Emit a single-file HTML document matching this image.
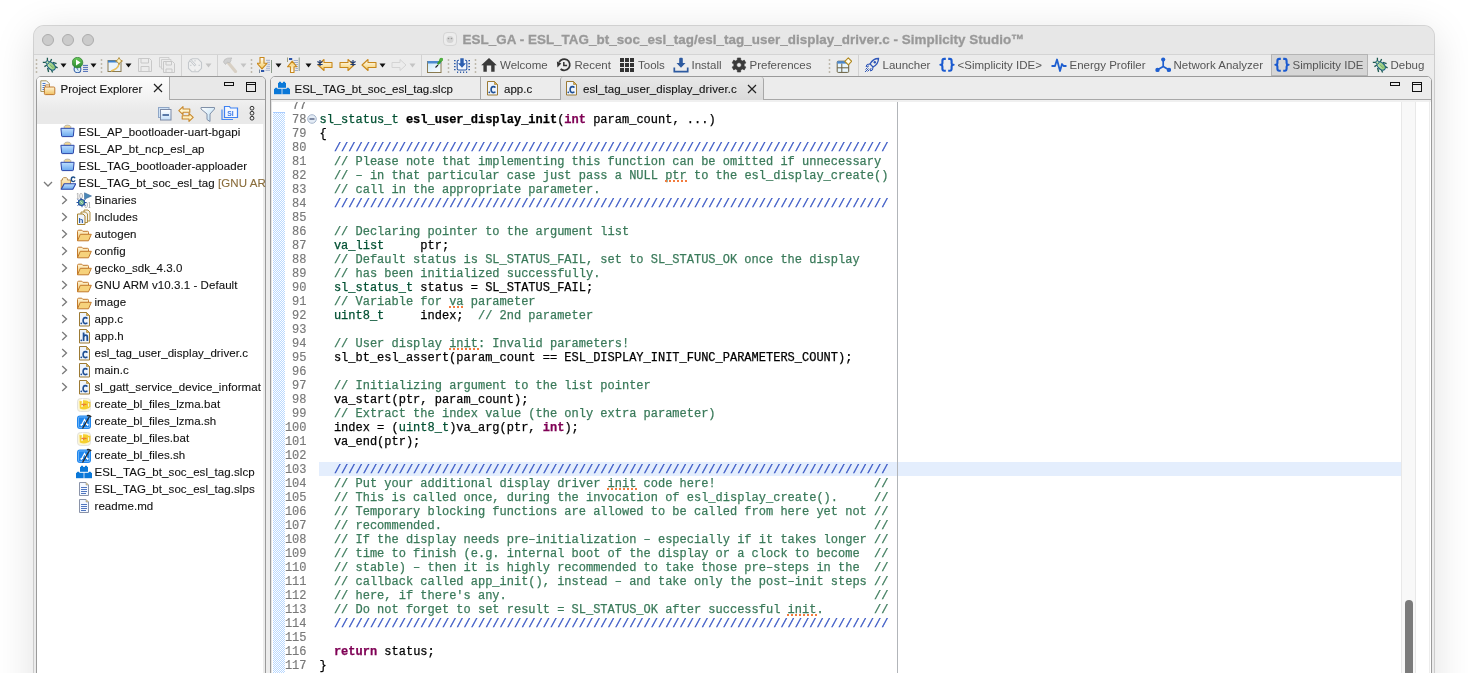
<!DOCTYPE html><html><head><meta charset="utf-8"><style>
*{margin:0;padding:0;box-sizing:border-box}
html,body{width:1468px;height:673px;overflow:hidden;background:#fff}
body{position:relative;font-family:"Liberation Sans",sans-serif;-webkit-font-smoothing:antialiased}
.root{position:absolute;left:0;top:0;width:1468px;height:673px;will-change:transform}
.abs,.ico,.ui,.tbt,.tt,.ln,.cl{position:absolute}
.ico{overflow:visible}
.win{position:absolute;left:34px;top:26px;width:1400px;height:700px;background:#ececec;border-radius:10px;
 box-shadow:0 0 0 1px rgba(0,0,0,0.15),0 8px 42px rgba(0,0,0,0.13)}
.title{position:absolute;left:34px;top:26px;width:1400px;height:29px;background:#e7e7e7;border-radius:10px 10px 0 0;border-bottom:1px solid #d4d4d4}
.light{position:absolute;width:12px;height:12px;border-radius:50%;background:#cbcbcb;border:1px solid #acacac;top:34px}
.ttl{position:absolute;left:462.5px;top:32px;font-weight:bold;font-size:13.4px;color:#999;-webkit-text-stroke:0.3px currentColor;letter-spacing:0.05px;white-space:pre;line-height:16px}
.tbt{font-size:11.5px;color:#555;white-space:pre;line-height:14px}
.ui{font-size:11.5px;color:#111;white-space:pre;line-height:14px;-webkit-text-stroke:0.1px currentColor}
.tt{font-size:11.5px;letter-spacing:0.07px;-webkit-text-stroke:0.1px currentColor;color:#111;white-space:pre;line-height:17px;height:17px}
.panel{position:absolute;background:#fff;border:1px solid #9a9a9a;border-radius:5px 5px 0 0}
.ln{left:270px;width:36.5px;text-align:right;font-family:"Liberation Mono",monospace;font-size:12px;line-height:14px;height:14px;color:#787878;padding-top:1px;-webkit-text-stroke:0.15px currentColor}
.cl{left:319.5px;font-family:"Liberation Mono",monospace;font-size:12px;line-height:14px;height:14px;color:#000;white-space:pre;padding-top:1px;-webkit-text-stroke:0.25px currentColor}
.ty{color:#005032}
.fn{font-weight:bold}
.kw{color:#7f0055;font-weight:bold}
.cm{color:#3a7a5a}
.cmsp{color:#3a7a5a}
.sq{position:absolute;height:2px;background-image:radial-gradient(circle at 2px 1px,#f37b3d 1.1px,rgba(243,123,61,0) 1.5px);background-size:4px 2px;background-repeat:repeat-x}
.dc{color:#3352c2}
</style></head><body>
<svg width="0" height="0" style="position:absolute"><defs>
<symbol id="i-prj" viewBox="0 0 16 16">
 <path d="M4.2 4.5 V2.6 Q4.6 1.1 7.5 1.1 Q10.4 1.1 10.8 2.6 V4.5 Z" fill="#f5d890" stroke="#a8a8a8" stroke-width=".8"/>
 <path d="M0.9 4.3 H14.1 L13.3 12.1 Q13.2 12.6 12.7 12.6 H2.3 Q1.8 12.6 1.7 12.1 Z" fill="url(#gblue)" stroke="#2a45a8" stroke-width="1" stroke-linejoin="round"/>
</symbol>
<linearGradient id="gblue" x1="0" y1="0" x2="0" y2="1"><stop offset="0" stop-color="#bfe0ff"/><stop offset="1" stop-color="#6aa8ee"/></linearGradient>
<linearGradient id="gyel" x1="0" y1="0" x2="0" y2="1"><stop offset="0" stop-color="#fff6d8"/><stop offset="1" stop-color="#f0c060"/></linearGradient>
<symbol id="i-prjc" viewBox="0 0 16 16">
 <path d="M1.2 14 V5 H2.5 V3.5 Q3 2.6 5 2.6 Q7 2.6 7.4 3.5 V5 H10.5 V9" fill="url(#gyel)" stroke="#b08040" stroke-width=".9"/>
 <path d="M1.2 14.3 L4.2 8.8 H15.8 L12.8 14.3 Z" fill="url(#gblue)" stroke="#2a45a8" stroke-width="1.1" stroke-linejoin="round"/>
 <path d="M15 3.2 Q14.6 2 13.3 2 Q11.3 2 11.3 4.3 Q11.3 6.6 13.3 6.6 Q14.6 6.6 15 5.4" fill="none" stroke="#1f4f88" stroke-width="1.4"/>
</symbol>
<symbol id="i-fold" viewBox="0 0 16 16">
 <path d="M1.5 14.8 V5.5 Q1.5 4.2 2.7 4.2 H5.8 L6.8 5.3 H11.5 Q12.5 5.3 12.5 6.3 V8" fill="url(#gyel)" stroke="#c27a2c" stroke-width="1"/>
 <path d="M1.5 14.8 L4.3 8.3 H15.3 L12.5 14.8 Z" fill="#f6d27c" stroke="#c27a2c" stroke-width="1" stroke-linejoin="round"/>
</symbol>
<symbol id="i-c" viewBox="0 0 16 16">
 <path d="M3.5 1.5 H10.5 L13.5 4.5 V15 H3.5 Z" fill="#eef4fc" stroke="#9c7a34" stroke-width="1"/>
 <path d="M10.5 1.5 V4.5 H13.5 Z" fill="#e0b04a" stroke="#9c7a34" stroke-width=".6"/>
 <circle cx="5.3" cy="12.3" r=".9" fill="#1f4f94"/>
 <path d="M11.3 7.6 Q10.8 6.6 9.3 6.6 Q7.1 6.6 7.1 9.6 Q7.1 12.6 9.3 12.6 Q10.8 12.6 11.3 11.6" fill="none" stroke="#1f4f94" stroke-width="1.6"/>
</symbol>
<symbol id="i-h" viewBox="0 0 16 16">
 <path d="M3.5 1.5 H10.5 L13.5 4.5 V15 H3.5 Z" fill="#eef4fc" stroke="#9c7a34" stroke-width="1"/>
 <path d="M10.5 1.5 V4.5 H13.5 Z" fill="#e0b04a" stroke="#9c7a34" stroke-width=".6"/>
 <circle cx="5.3" cy="12.3" r=".9" fill="#1f4f94"/>
 <path d="M7.6 4.5 V13 M7.6 9 Q8.2 7.2 9.8 7.2 Q11.3 7.2 11.3 9 V13" fill="none" stroke="#1f4f94" stroke-width="1.8"/>
</symbol>
<symbol id="i-txt" viewBox="0 0 16 16">
 <path d="M3.5 1.5 H10 L12.5 4 V14.5 H3.5 Z" fill="#f4f8ff" stroke="#8a93a8" stroke-width="1"/>
 <path d="M10 1.5 V4 H12.5" fill="#e8c870" stroke="#8a93a8" stroke-width=".6"/>
 <path d="M5 6.5h6M5 8.5h6M5 10.5h6M5 12.5h5" stroke="#3d66b8" stroke-width=".9"/>
</symbol>
<symbol id="i-bat" viewBox="0 0 16 16">
 <rect x="1.5" y="2.5" width="13" height="13" rx="3" fill="#fbf6d8" stroke="#dcdcdc" stroke-width=".8"/>
 <path d="M3.5 5 Q8 3.5 12 5 V12.5 Q8 14.5 3.8 12.5 Z" fill="#f6d030"/>
 <path d="M12 6.5 H13.8 V10.5 L12 12" fill="none" stroke="#f0c830" stroke-width="1.3"/>
 <path d="M4.5 5 L6.5 3.5 L6 11" stroke="#ffffff" stroke-width="1.1" fill="none"/>
 <path d="M5.5 8.5 Q8 7.8 10.5 8.5 M7.5 9 L8 10" stroke="#e86a30" stroke-width="1" fill="none"/>
</symbol>
<symbol id="i-sh" viewBox="0 0 16 16">
 <rect x="1" y="2.5" width="14" height="13.5" rx="3" fill="#1f86ee"/>
 <rect x="2.5" y="4" width="11" height="10.5" rx="1" fill="none" stroke="#9cd0ff" stroke-width=".6"/>
 <path d="M5 13 L8.5 6.5 L12 13 M4.5 11.5 H7 M10 11.5 H12.5" fill="none" stroke="#ffffff" stroke-width="1.1"/>
 <path d="M6.5 15.5 L13.5 3.5" stroke="#2a2a2a" stroke-width="1.3"/>
 <path d="M11 2.8 Q13 1.8 15.2 3.8" stroke="#2a2a2a" stroke-width="1.6" fill="none"/>
</symbol>
<symbol id="i-slcp" viewBox="0 0 16 16">
 <g fill="#0a78d8">
 <rect x="4" y="3" width="8" height="4.8"/><rect x="4.8" y="1.8" width="2.4" height="1.6" rx=".6"/><rect x="8.8" y="1.8" width="2.4" height="1.6" rx=".6"/>
 <rect x="0" y="8.8" width="7.2" height="5.4"/><rect x="8.8" y="8.8" width="7.2" height="5.4"/>
 <rect x="1" y="7.8" width="2.4" height="1.4" rx=".6"/><rect x="12.6" y="7.8" width="2.4" height="1.4" rx=".6"/>
 </g>
 <rect x="7.2" y="8.8" width="1.6" height="5.4" fill="#4f9be0"/>
</symbol>
<symbol id="i-bin" viewBox="0 0 16 16">
 <text x="0" y="6.8" font-family="Liberation Serif" font-size="7.2" fill="#8a8a8a" letter-spacing="-.3">10</text>
 <path d="M8.5 0.8 L15.5 4 L8.5 7.2 Z" fill="#4a88b8" stroke="#3a6a98" stroke-width=".6"/>
 <text x="8.2" y="15.5" font-family="Liberation Serif" font-size="7.2" fill="#8a8a8a" letter-spacing="-.3">01</text>
 <path d="M1.5 7.5 l2 1.5 M0.5 10.5 h2 M1.5 13.5 l2 -1.5 M9.5 7.5 l-2 1.5 M10.5 10.5 h-2 M9.5 13.5 l-2 -1.5 M5 5.8 v1.5 M6 15.2 v-1.5" stroke="#1f4fa0" stroke-width="1"/>
 <circle cx="5.5" cy="10.5" r="3" fill="#78b890" stroke="#1f4fa0" stroke-width="1.1"/>
 <path d="M4.3 9.3 L6.7 11.7" stroke="#e0f0e0" stroke-width=".8"/>
</symbol>
<symbol id="i-inc" viewBox="0 0 16 16">
 <path d="M8 1 H12 L14 3 V12 H8 Z" fill="#f4f2ea" stroke="#a8832f" stroke-width=".9"/>
 <path d="M5 3 H9.5 L11.5 5 V13.5 H5 Z" fill="#f4f2ea" stroke="#a8832f" stroke-width=".9"/>
 <path d="M1.5 5 H7 L9 7 V15.5 H1.5 Z" fill="#eef4fc" stroke="#a8832f" stroke-width="1"/>
 <text x="2.5" y="14" font-family="Liberation Sans" font-weight="bold" font-size="8" fill="#2458a4">h</text>
</symbol>
<symbol id="i-pe" viewBox="0 0 16 16">
 <path d="M0.8 0.8 H6.5 L9.5 3.8 V11.5 H0.8 Z" fill="#f4f8fc" stroke="#a89860" stroke-width="1"/>
 <path d="M2.5 3.5h3M2.5 5.5h4M2.5 7.5h4M2.5 9.5h4" stroke="#4a7ac8" stroke-width="1"/>
 <path d="M5.3 7 V5.6 Q5.3 4.9 6 4.9 H8.8 Q9.5 4.9 9.5 5.6 V7" fill="#fff8e0" stroke="#c07a30" stroke-width=".9"/>
 <rect x="4.4" y="7" width="10.4" height="7.6" rx="1" fill="url(#gyel)" stroke="#c07a30" stroke-width="1"/>
</symbol>
<symbol id="i-bug" viewBox="0 0 16 16">
 <path d="M5.4 0.8 V4.2 M9.6 2 L8.3 5 M0.8 5.4 H4.2 M2.4 9.6 L5 8 M10.8 5.4 L14.6 6.6 M12.8 9.4 L15.6 10.8 M5.6 11 L6.6 15 M9.4 12.8 L10.6 15.6" stroke="#1d5a50" stroke-width="1.3"/>
 <ellipse cx="9.2" cy="9" rx="3.2" ry="4.9" transform="rotate(-45 9.2 9)" fill="url(#gbug)" stroke="#1d6080" stroke-width="1.1"/>
 <circle cx="5.4" cy="5.4" r="1.6" fill="#c0e4a8" stroke="#1d6080" stroke-width="1"/>
 <path d="M7.6 7.4 L11 10.8" stroke="#6aa858" stroke-width=".8"/>
</symbol>
<linearGradient id="gbug" x1="0" y1="0" x2="1" y2="1"><stop offset="0" stop-color="#d8f0c0"/><stop offset="1" stop-color="#78b860"/></linearGradient>
<symbol id="i-run" viewBox="0 0 16 16">
 <circle cx="5.5" cy="12.3" r="3.4" fill="#dff0fa" stroke="#3560a8" stroke-width="1.1"/>
 <path d="M4.6 10.5 L6.2 13.5" stroke="#3560a8" stroke-width=".8"/>
 <circle cx="5.5" cy="5.6" r="5.3" fill="url(#grun)" stroke="#2a7a30" stroke-width=".7"/>
 <path d="M4 2.6 L8.6 5.6 L4 8.6 Z" fill="#fff"/>
 <path d="M11 8.4h5M11 10.4h5M11 12.4h5M11 14.4h5" stroke="#4a6ab8" stroke-width="1"/>
</symbol>
<linearGradient id="grun" x1="0" y1="0" x2="0" y2="1"><stop offset="0" stop-color="#6ac858"/><stop offset="1" stop-color="#2a8a30"/></linearGradient>
<symbol id="i-new" viewBox="0 0 16 16">
 <rect x="1" y="3.5" width="13" height="11" fill="#eaf4fc" stroke="#8a7a50" stroke-width="1"/>
 <rect x="1" y="3.5" width="10" height="2" fill="#3b83d0"/>
 <path d="M12 7 Q11 12 4 14" stroke="#e8c060" stroke-width="1.5" fill="none"/>
 <path d="M12 0.5 L13.2 2.8 L15.5 4 L13.2 5.2 L12 7.5 L10.8 5.2 L8.5 4 L10.8 2.8 Z" fill="#fff4c0" stroke="#a8802a" stroke-width=".8"/>
</symbol>
<symbol id="i-save" viewBox="0 0 16 16">
 <path d="M1.5 1.5 H12.5 L14.5 3.5 V14.5 H1.5 Z" fill="none" stroke="#c8c8c8" stroke-width="1"/>
 <path d="M4 1.5 V6 H11.5 V1.5 M4 14.5 V9.5 H12 V14.5" fill="none" stroke="#c8c8c8" stroke-width="1"/>
</symbol>
<symbol id="i-saveall" viewBox="0 0 16 16">
 <path d="M0.5 0.5 H10 V2 M0.5 0.5 V10 H2" fill="none" stroke="#ccc" stroke-width=".9"/>
 <path d="M2.5 2.5 H12 V4 M2.5 2.5 V12 H4" fill="none" stroke="#ccc" stroke-width=".9"/>
 <path d="M4.5 4.5 H13.5 L15.5 6.5 V15.5 H4.5 Z M7 15.5 V12 H13 V15.5 M7 4.5 V8 H12.5 V4.5" fill="none" stroke="#c8c8c8" stroke-width="1"/>
</symbol>
<symbol id="i-clock" viewBox="0 0 16 16">
 <path d="M5 1.8 H11 L14.5 5.3 V11.3 L11 14.8 H5 L1.5 11.3 V5.3 Z" fill="#f0f0f0" stroke="#c4c8cc" stroke-width="1.1" stroke-linejoin="round"/>
 <path d="M8 3v1.5M8 12.5V14M3 8.3h1.5M11.5 8.3H13" stroke="#c4c8cc" stroke-width=".9"/>
 <path d="M3 2.5 L8.5 8.8" stroke="#c4c8cc" stroke-width="2.4"/>
 <path d="M3.4 2.9 L8.2 8.4" stroke="#f4f4f4" stroke-width=".9"/>
</symbol>
<symbol id="i-hammer" viewBox="0 0 16 16">
 <path d="M6.5 6 L13.5 14.5" stroke="#d8d0c4" stroke-width="3.2" stroke-linecap="round"/>
 <path d="M1.5 5 Q2 2 5.5 1.2 L10 1 Q8.5 2 9 3.5 L7.5 6 L5.5 5 L3.5 7.5 Z" fill="#d0d0d0" stroke="#bcbcbc" stroke-width=".8" stroke-linejoin="round"/>
</symbol>
<symbol id="i-down" viewBox="0 0 16 16">
 <path d="M9 3.3h4M10 5.3h3M10.5 7.3h2.5M9.5 9.3h3.5M9 11.3h4M8.5 13.3h4.5" stroke="#9aa8c8" stroke-width=".9"/>
 <path d="M14.5 3 V16" stroke="#8a9a8a" stroke-width="1"/>
 <path d="M2.5 12.5 V16" stroke="#7a8aa0" stroke-width="1"/>
 <rect x="4" y="13" width="3.2" height="2" fill="#2d55a8"/>
 <path d="M3 0.5 H7 V6.3 H10 L5 11.8 L0 6.3 H3 Z" fill="url(#gyel2)" stroke="#c8881c" stroke-width="1.1" stroke-linejoin="round"/>
</symbol>
<linearGradient id="gyel2" x1="0" y1="0" x2="0" y2="1"><stop offset="0" stop-color="#ffffff"/><stop offset="1" stop-color="#f6cc60"/></linearGradient>
<symbol id="i-up" viewBox="0 0 16 16">
 <path d="M6.5 3.5h4.5M6.5 5.5h4.5M8 7.5h3M8 9.5h3M8.5 11.5h2.5M7.5 13.5h3.5" stroke="#9aa8c8" stroke-width=".9"/>
 <path d="M12.2 0.5 V14" stroke="#8a9a8a" stroke-width="1"/>
 <path d="M0.5 0.5 V5" stroke="#9a9a7a" stroke-width="1"/>
 <rect x="2" y="1" width="3.2" height="2" fill="#2d55a8"/>
 <path d="M3.5 15.5 H7 V9.8 H9.8 L5.2 4.2 L0.5 9.8 H3.5 Z" fill="url(#gyel3)" stroke="#c8881c" stroke-width="1.1" stroke-linejoin="round"/>
</symbol>
<linearGradient id="gyel3" x1="0" y1="1" x2="0" y2="0"><stop offset="0" stop-color="#ffffff"/><stop offset="1" stop-color="#f6cc60"/></linearGradient>
<symbol id="i-back" viewBox="0 0 16 16">
 <path d="M1 8 L7 2.5 V5.5 H15 V10.5 H7 V13.5 Z" fill="url(#gyel2)" stroke="#c8881c" stroke-width="1.1" stroke-linejoin="round"/>
</symbol>
<symbol id="i-fwd" viewBox="0 0 16 16">
 <path d="M15 8 L9 2.5 V5.5 H1 V10.5 H9 V13.5 Z" fill="url(#gyel2)" stroke="#c8881c" stroke-width="1.1" stroke-linejoin="round"/>
</symbol>
<symbol id="i-fwdd" viewBox="0 0 16 16">
 <path d="M15 8 L9 2.5 V5.5 H1 V10.5 H9 V13.5 Z" fill="none" stroke="#d4d4d4" stroke-width="1"/>
</symbol>
<symbol id="i-star" viewBox="0 0 6 6">
 <path d="M3 0 V6 M0.4 1.5 L5.6 4.5 M0.4 4.5 L5.6 1.5" stroke="#1e3a70" stroke-width="1.2"/>
</symbol>
<symbol id="i-persp" viewBox="0 0 16 16">
 <rect x="0.5" y="4.5" width="13.5" height="11" fill="url(#gwin)" stroke="#8a7a50" stroke-width="1"/>
 <rect x="0.5" y="4" width="13.5" height="2.5" fill="#4a8ad0"/>
 <path d="M11 8 L8.5 10.5" stroke="#222" stroke-width="1.1"/>
 <path d="M10 6.5 L13.5 1.5 Q15 0.5 16 2 L15.5 3.5 L11.5 8 Z" fill="#3a9a30"/>
 <circle cx="14.2" cy="2.6" r="1.8" fill="#50b040"/>
</symbol>
<linearGradient id="gwin" x1="0" y1="0" x2="1" y2="1"><stop offset="0" stop-color="#c8e8fa"/><stop offset="1" stop-color="#ffffff"/></linearGradient>
<symbol id="i-chip" viewBox="0 0 16 16">
 <path d="M5 3.2 H4.5 Q3.2 3.2 3.2 4.5 V11.8 Q3.2 13 4.5 13 H11.5 Q12.8 13 12.8 11.8 V4.5 Q12.8 3.2 11.5 3.2 H11" fill="#f2f6fc" stroke="#2d5aa8" stroke-width="1.1"/>
 <path d="M6.3 1.2 H9.7 V6.3 H12 L8 10.8 L4 6.3 H6.3 Z" fill="#2d5fb0"/>
 <path d="M-0.2 3.6h1.8M-0.2 6.6h1.8M-0.2 9.6h1.8M-0.2 12.6h1.8M14.4 3.6h1.8M14.4 6.6h1.8M14.4 9.6h1.8M14.4 12.6h1.8M3.6 14.6v1.8M6.6 14.6v1.8M9.6 14.6v1.8M12.6 14.6v1.8" stroke="#2d5aa8" stroke-width="1.1"/>
</symbol>
<symbol id="i-home" viewBox="0 0 16 16">
 <path d="M8 1 L15.8 8.2 H13.6 V14.8 H10.2 V8.6 H5.8 V14.8 H2.4 V8.2 H0.2 Z" fill="#3a3a3a"/>
</symbol>
<symbol id="i-recent" viewBox="0 0 16 16">
 <path d="M4.6 12 A5.6 5.6 0 1 0 3.1 5.4" fill="none" stroke="#333" stroke-width="1.7"/>
 <path d="M0.9 4.6 L5.3 6.6 L1.4 10.6 Z" fill="#333"/>
 <path d="M7.8 5 V8.4 H11.1" fill="none" stroke="#333" stroke-width="1.5"/>
</symbol>
<symbol id="i-tools" viewBox="0 0 16 16">
 <path d="M1 1h4v4h-4zM6 1h4v4h-4zM11 1h4v4h-4zM1 6h4v4h-4zM6 6h4v4h-4zM11 6h4v4h-4zM1 11h4v4h-4zM6 11h4v4h-4zM11 11h4v4h-4z" fill="#333"/>
</symbol>
<symbol id="i-install" viewBox="0 0 16 16">
 <path d="M6.2 1.8 Q6.2 0.8 7.2 0.8 H8.8 Q9.8 0.8 9.8 1.8 V6 H12.5 L8 10.8 L3.5 6 H6.2 Z" fill="#2d5aa0"/>
 <path d="M1.3 10.6 V14.6 H14.7 V10.6" fill="none" stroke="#2d5aa0" stroke-width="1.7"/>
</symbol>
<symbol id="i-gear" viewBox="0 0 16 16">
 <path d="M6.22 3.11 L6.38 0.98 L9.62 0.98 L9.78 3.11 L11.34 4.02 L13.27 3.09 L14.89 5.89 L13.12 7.10 L13.12 8.90 L14.89 10.11 L13.27 12.91 L11.34 11.98 L9.78 12.89 L9.62 15.02 L6.38 15.02 L6.22 12.89 L4.66 11.98 L2.73 12.91 L1.11 10.11 L2.88 8.90 L2.88 7.10 L1.11 5.89 L2.73 3.09 L4.66 4.02 Z M8 5.7 A2.3 2.3 0 1 1 7.99 5.7 Z" fill="#3a3a3a" fill-rule="evenodd" stroke="#3a3a3a" stroke-width=".6" stroke-linejoin="round"/>
</symbol>
<symbol id="i-openp" viewBox="0 0 16 16">
 <rect x="1.2" y="4.2" width="11.5" height="11.2" rx="1" fill="#e8f6fe" stroke="#6a6040" stroke-width="1"/>
 <rect x="1.2" y="4.2" width="11.5" height="2.4" fill="#4a88d0"/>
 <path d="M1.2 10.8h11.5M5.8 6.6V15.4" stroke="#6a6040" stroke-width="1"/>
 <path d="M12.3 0.8 L15.7 4.3 L12.3 7.8 L8.8 4.3 Z" fill="#fff6d0" stroke="#b08820" stroke-width="1.1" stroke-linejoin="round"/>
 <path d="M12.3 2.5v3.6M10.5 4.3h3.6" stroke="#ffffff" stroke-width=".9"/>
</symbol>
<symbol id="i-rocket" viewBox="0 0 16 16">
 <path d="M14.5 1.5 Q9 1.5 6 7 L9 10 Q14.5 7 14.5 1.5 Z" fill="none" stroke="#2d55b8" stroke-width="1.3"/>
 <circle cx="10.8" cy="5.2" r="1.2" fill="#2d55b8"/>
 <path d="M6 7 L3 7.5 L2 9.5 L5 9 M9 10 L8.5 13 L6.5 14 L7 11" fill="none" stroke="#2d55b8" stroke-width="1"/>
 <path d="M4.5 11.5 L1 15 M3.5 10.5 L1.5 12.5 M5.5 12.5 L3.5 14.5" stroke="#2d55b8" stroke-width="1"/>
</symbol>
<symbol id="i-braces" viewBox="0 0 16 16">
 <path d="M6.8 1.9 H5.2 Q3.4 1.9 3.4 3.9 V5.9 Q3.4 7.8 1.4 7.8 Q3.4 7.8 3.4 9.8 V11.8 Q3.4 13.7 5.2 13.7 H6.8 M9.2 1.9 H10.8 Q12.6 1.9 12.6 3.9 V5.9 Q12.6 7.8 14.6 7.8 Q12.6 7.8 12.6 9.8 V11.8 Q12.6 13.7 10.8 13.7 H9.2" fill="none" stroke="#1a5ad0" stroke-width="2.1" stroke-linejoin="round"/>
</symbol>
<symbol id="i-pulse" viewBox="0 0 16 16">
 <path d="M0.5 9 H4 L6 2.5 L9 14 L11 7 L12.5 9 H15.5" fill="none" stroke="#1f5fd0" stroke-width="1.8" stroke-linejoin="round"/>
</symbol>
<symbol id="i-net" viewBox="0 0 16 16">
 <path d="M8.2 2.8 V9.4 L2.6 12.8 M8.2 9.4 L13.8 12.8" stroke="#1f5fd0" stroke-width="1.7" fill="none"/>
 <circle cx="8.2" cy="2.6" r="2.1" fill="#1f5fd0"/><circle cx="2.5" cy="12.9" r="2.2" fill="#1f5fd0"/><circle cx="13.9" cy="12.9" r="2.2" fill="#1f5fd0"/>
</symbol>
<symbol id="i-collapse" viewBox="0 0 16 16">
 <rect x="1.5" y="2.5" width="10.5" height="10" fill="#cfe2f6" stroke="#8fa6c6" stroke-width="1"/>
 <rect x="3.5" y="4.5" width="10.5" height="10.5" fill="url(#gcol)" stroke="#7c8aa6" stroke-width="1"/>
 <path d="M5.5 10h6.5" stroke="#123a7a" stroke-width="1.3"/>
</symbol>
<linearGradient id="gcol" x1="0" y1="0" x2="0" y2="1"><stop offset="0" stop-color="#ffffff"/><stop offset="1" stop-color="#c4e0fa"/></linearGradient>
<symbol id="i-link" viewBox="0 0 16 16">
 <path d="M5 0.6 L0.8 4.6 L5 8.6 V6.2 H11.8 V3 H5 Z" fill="#fff4cc" stroke="#c8882c" stroke-width="1.1" stroke-linejoin="round"/>
 <path d="M11 7.4 L15.2 11.4 L11 15.4 V13 H4.2 V9.8 H11 Z" fill="#fff0c0" stroke="#c8882c" stroke-width="1.1" stroke-linejoin="round"/>
</symbol>
<symbol id="i-filter" viewBox="0 0 16 16">
 <path d="M1 1.5 H14.5 V3 L10 8 V15.5 L7 13.5 V8 L1 3 Z" fill="url(#gfil)" stroke="#8090a8" stroke-width="1" stroke-linejoin="round"/>
</symbol>
<linearGradient id="gfil" x1="0" y1="0" x2="1" y2="1"><stop offset="0" stop-color="#ffffff"/><stop offset="1" stop-color="#b8dcf4"/></linearGradient>
<symbol id="i-si" viewBox="0 0 18 16">
 <path d="M1 4.5 V14.5 H12" fill="none" stroke="#4a8af0" stroke-width="1.2"/>
 <path d="M3.5 1.5 H8.5 L9.5 3 H16.5 V12.5 H3.5 Z" fill="#f4f8ff" stroke="#3f82f2" stroke-width="1.2"/>
 <text x="6.2" y="10.8" font-family="Liberation Sans" font-weight="bold" font-size="6.8" fill="#3a7ae8">SI</text>
</symbol>
<symbol id="i-dots" viewBox="0 0 6 16">
 <circle cx="3" cy="3.2" r="1.9" fill="none" stroke="#333" stroke-width="1"/>
 <circle cx="3" cy="8.2" r="1.9" fill="none" stroke="#333" stroke-width="1"/>
 <circle cx="3" cy="13.2" r="1.9" fill="none" stroke="#333" stroke-width="1"/>
</symbol>
<symbol id="i-fold78" viewBox="0 0 10 10">
 <circle cx="5" cy="5" r="4.3" fill="#e4ecf6" stroke="#a6b6cc" stroke-width="1"/>
 <path d="M2.5 5 H7.5" stroke="#2a3a60" stroke-width="1.1"/>
</symbol>
<symbol id="i-titleico" viewBox="0 0 14 14">
 <rect x="0.5" y="0.5" width="13" height="13" rx="3.5" fill="#ececec" stroke="#cfcfcf" stroke-width=".8"/>
 <circle cx="7" cy="7.5" r="3.5" fill="#d4d4d4"/>
 <circle cx="5.5" cy="6.5" r=".8" fill="#999"/><circle cx="8.5" cy="6.5" r=".8" fill="#999"/>
</symbol>
<pattern id="hatch" width="2" height="2" patternUnits="userSpaceOnUse"><rect width="2" height="2" fill="#ffffff"/><rect width="1" height="1" fill="#b8d8ff"/><rect x="1" y="1" width="1" height="1" fill="#b8d8ff"/></pattern>
</defs></svg>
<div class="root">
<div class="win"></div>
<div class="title"></div>
<div class="light" style="left:41.5px"></div>
<div class="light" style="left:61.5px"></div>
<div class="light" style="left:81.5px"></div>
<svg class="ico" style="left:443px;top:32px;width:14px;height:14px" viewBox="0 0 14 14"><use href="#i-titleico" width="14" height="14"/></svg>
<div class="ttl">ESL_GA - ESL_TAG_bt_soc_esl_tag/esl_tag_user_display_driver.c - Simplicity Studio™</div>
<svg class="ico" style="left:35px;top:58px;width:3px;height:16px" viewBox="0 0 3 16"><path d="M1.5 1.5v1M1.5 5.5v1M1.5 9.5v1M1.5 13.5v1" stroke="#8f846c" stroke-width="1.5"/></svg>
<svg class="ico" style="left:42px;top:57px;width:16px;height:16px" viewBox="0 0 16 16"><use href="#i-bug" width="16" height="16"/></svg>
<svg class="ico" style="left:60px;top:63px;width:7px;height:5px" viewBox="0 0 7 5"><path d="M0.5 0.5 H6.5 L3.5 4.5 Z" fill="#111"/></svg>
<svg class="ico" style="left:72px;top:57px;width:16px;height:16px" viewBox="0 0 16 16"><use href="#i-run" width="16" height="16"/></svg>
<svg class="ico" style="left:90px;top:63px;width:7px;height:5px" viewBox="0 0 7 5"><path d="M0.5 0.5 H6.5 L3.5 4.5 Z" fill="#111"/></svg>
<svg class="ico" style="left:100px;top:58px;width:3px;height:16px" viewBox="0 0 3 16"><path d="M1.5 1.5v1M1.5 5.5v1M1.5 9.5v1M1.5 13.5v1" stroke="#8f846c" stroke-width="1.5"/></svg>
<svg class="ico" style="left:107px;top:57px;width:16px;height:16px" viewBox="0 0 16 16"><use href="#i-new" width="16" height="16"/></svg>
<svg class="ico" style="left:125px;top:63px;width:7px;height:5px" viewBox="0 0 7 5"><path d="M0.5 0.5 H6.5 L3.5 4.5 Z" fill="#111"/></svg>
<svg class="ico" style="left:137px;top:57px;width:16px;height:16px" viewBox="0 0 16 16"><use href="#i-save" width="16" height="16"/></svg>
<svg class="ico" style="left:159px;top:57px;width:16px;height:16px" viewBox="0 0 16 16"><use href="#i-saveall" width="16" height="16"/></svg>
<div class="abs" style="left:181px;top:55px;width:1px;height:21px;background:#d2d2d2"></div>
<svg class="ico" style="left:187px;top:57px;width:16px;height:16px" viewBox="0 0 16 16"><use href="#i-clock" width="16" height="16"/></svg>
<svg class="ico" style="left:205px;top:63px;width:7px;height:5px" viewBox="0 0 7 5"><path d="M0.5 0.5 H6.5 L3.5 4.5 Z" fill="#c4c4c4"/></svg>
<div class="abs" style="left:217px;top:55px;width:1px;height:21px;background:#d2d2d2"></div>
<svg class="ico" style="left:222px;top:57px;width:16px;height:16px" viewBox="0 0 16 16"><use href="#i-hammer" width="16" height="16"/></svg>
<svg class="ico" style="left:240px;top:63px;width:7px;height:5px" viewBox="0 0 7 5"><path d="M0.5 0.5 H6.5 L3.5 4.5 Z" fill="#c4c4c4"/></svg>
<svg class="ico" style="left:250px;top:58px;width:3px;height:16px" viewBox="0 0 3 16"><path d="M1.5 1.5v1M1.5 5.5v1M1.5 9.5v1M1.5 13.5v1" stroke="#8f846c" stroke-width="1.5"/></svg>
<svg class="ico" style="left:257px;top:57px;width:16px;height:16px" viewBox="0 0 16 16"><use href="#i-down" width="16" height="16"/></svg>
<svg class="ico" style="left:275px;top:63px;width:7px;height:5px" viewBox="0 0 7 5"><path d="M0.5 0.5 H6.5 L3.5 4.5 Z" fill="#111"/></svg>
<svg class="ico" style="left:287px;top:57px;width:16px;height:16px" viewBox="0 0 16 16"><use href="#i-up" width="16" height="16"/></svg>
<svg class="ico" style="left:305px;top:63px;width:7px;height:5px" viewBox="0 0 7 5"><path d="M0.5 0.5 H6.5 L3.5 4.5 Z" fill="#111"/></svg>
<svg class="ico" style="left:317px;top:57px;width:16px;height:16px" viewBox="0 0 16 16"><use href="#i-back" width="16" height="16"/></svg>
<svg class="ico" style="left:316.5px;top:59.5px;width:6px;height:6px" viewBox="0 0 6 6"><use href="#i-star" width="6" height="6"/></svg>
<svg class="ico" style="left:339px;top:57px;width:16px;height:16px" viewBox="0 0 16 16"><use href="#i-fwd" width="16" height="16"/></svg>
<svg class="ico" style="left:349.5px;top:59.5px;width:6px;height:6px" viewBox="0 0 6 6"><use href="#i-star" width="6" height="6"/></svg>
<svg class="ico" style="left:361px;top:57px;width:16px;height:16px" viewBox="0 0 16 16"><use href="#i-back" width="16" height="16"/></svg>
<svg class="ico" style="left:379px;top:63px;width:7px;height:5px" viewBox="0 0 7 5"><path d="M0.5 0.5 H6.5 L3.5 4.5 Z" fill="#111"/></svg>
<svg class="ico" style="left:391px;top:57px;width:16px;height:16px" viewBox="0 0 16 16"><use href="#i-fwdd" width="16" height="16"/></svg>
<svg class="ico" style="left:409px;top:63px;width:7px;height:5px" viewBox="0 0 7 5"><path d="M0.5 0.5 H6.5 L3.5 4.5 Z" fill="#c4c4c4"/></svg>
<div class="abs" style="left:421px;top:55px;width:1px;height:21px;background:#d2d2d2"></div>
<svg class="ico" style="left:427px;top:57px;width:16px;height:16px" viewBox="0 0 16 16"><use href="#i-persp" width="16" height="16"/></svg>
<svg class="ico" style="left:447px;top:58px;width:3px;height:16px" viewBox="0 0 3 16"><path d="M1.5 1.5v1M1.5 5.5v1M1.5 9.5v1M1.5 13.5v1" stroke="#8f846c" stroke-width="1.5"/></svg>
<svg class="ico" style="left:454px;top:57px;width:16px;height:16px" viewBox="0 0 16 16"><use href="#i-chip" width="16" height="16"/></svg>
<svg class="ico" style="left:474px;top:58px;width:3px;height:16px" viewBox="0 0 3 16"><path d="M1.5 1.5v1M1.5 5.5v1M1.5 9.5v1M1.5 13.5v1" stroke="#8f846c" stroke-width="1.5"/></svg>
<svg class="ico" style="left:481px;top:57px;width:16px;height:16px" viewBox="0 0 16 16"><use href="#i-home" width="16" height="16"/></svg>
<div class="tbt" style="left:500px;top:58px;">Welcome</div>
<svg class="ico" style="left:556px;top:57px;width:16px;height:16px" viewBox="0 0 16 16"><use href="#i-recent" width="16" height="16"/></svg>
<div class="tbt" style="left:574.5px;top:58px;">Recent</div>
<svg class="ico" style="left:619px;top:57px;width:16px;height:16px" viewBox="0 0 16 16"><use href="#i-tools" width="16" height="16"/></svg>
<div class="tbt" style="left:638px;top:58px;">Tools</div>
<svg class="ico" style="left:673px;top:57px;width:16px;height:16px" viewBox="0 0 16 16"><use href="#i-install" width="16" height="16"/></svg>
<div class="tbt" style="left:691.5px;top:58px;">Install</div>
<svg class="ico" style="left:731px;top:57px;width:16px;height:16px" viewBox="0 0 16 16"><use href="#i-gear" width="16" height="16"/></svg>
<div class="tbt" style="left:749.5px;top:58px;">Preferences</div>
<svg class="ico" style="left:828px;top:58px;width:3px;height:16px" viewBox="0 0 3 16"><path d="M1.5 1.5v1M1.5 5.5v1M1.5 9.5v1M1.5 13.5v1" stroke="#8f846c" stroke-width="1.5"/></svg>
<svg class="ico" style="left:836px;top:57px;width:16px;height:16px" viewBox="0 0 16 16"><use href="#i-openp" width="16" height="16"/></svg>
<div class="abs" style="left:858px;top:55px;width:1px;height:21px;background:#d2d2d2"></div>
<svg class="ico" style="left:864px;top:57px;width:16px;height:16px" viewBox="0 0 16 16"><use href="#i-rocket" width="16" height="16"/></svg>
<div class="tbt" style="left:882.5px;top:58px;">Launcher</div>
<svg class="ico" style="left:939px;top:57px;width:16px;height:16px" viewBox="0 0 16 16"><use href="#i-braces" width="16" height="16"/></svg>
<div class="tbt" style="left:957.5px;top:58px;">&lt;Simplicity IDE&gt;</div>
<svg class="ico" style="left:1051px;top:57px;width:16px;height:16px" viewBox="0 0 16 16"><use href="#i-pulse" width="16" height="16"/></svg>
<div class="tbt" style="left:1069.5px;top:58px;">Energy Profiler</div>
<svg class="ico" style="left:1155px;top:57px;width:16px;height:16px" viewBox="0 0 16 16"><use href="#i-net" width="16" height="16"/></svg>
<div class="tbt" style="left:1173.5px;top:58px;">Network Analyzer</div>
<div class="abs" style="left:1271px;top:54px;width:97px;height:22px;background:#d6d6d6;border:1px solid #b4b4b4;box-sizing:border-box"></div>
<svg class="ico" style="left:1274px;top:57px;width:16px;height:16px" viewBox="0 0 16 16"><use href="#i-braces" width="16" height="16"/></svg>
<div class="tbt" style="left:1292.5px;top:58px;">Simplicity IDE</div>
<svg class="ico" style="left:1372px;top:57px;width:16px;height:16px" viewBox="0 0 16 16"><use href="#i-bug" width="16" height="16"/></svg>
<div class="tbt" style="left:1390.5px;top:58px;">Debug</div>
<div class="panel" style="left:36px;top:76px;width:230px;height:620px;background:#ececec"></div>
<div class="abs" style="left:37px;top:77px;width:228px;height:23px;background:#e8e8e8;border-radius:4px 4px 0 0;border-bottom:1px solid #a8a8a8"></div>
<div class="abs" style="left:37px;top:77px;width:133px;height:23px;background:linear-gradient(#fdfdfd,#f1f1f1);border-right:1px solid #a8a8a8;border-radius:4px 0 0 0"></div>
<svg class="ico" style="left:40px;top:80px;width:16px;height:16px" viewBox="0 0 16 16"><use href="#i-pe" width="16" height="16"/></svg>
<div class="ui" style="left:60.5px;top:81.5px;">Project Explorer</div>
<svg class="ico" style="left:153px;top:83px;width:10px;height:10px" viewBox="0 0 10 10"><path d="M1 1 L9 9 M9 1 L1 9" stroke="#222" stroke-width="1.2"/></svg>
<div class="abs" style="left:224px;top:82px;width:10px;height:4px;border:1px solid #111;border-width:1.5px 1px"></div>
<div class="abs" style="left:246px;top:82px;width:10px;height:10px;border:1px solid #111"><div style="position:absolute;left:0;top:1px;width:8px;height:1px;background:#111"></div></div>
<div class="abs" style="left:37px;top:100px;width:228px;height:24px;background:linear-gradient(#f0f0f0,#e9e9e9 12px,#e9e9e9)"></div>
<svg class="ico" style="left:156.5px;top:104.5px;width:16px;height:16px" viewBox="0 0 16 16"><use href="#i-collapse" width="16" height="16"/></svg>
<svg class="ico" style="left:178px;top:105.5px;width:16px;height:16px" viewBox="0 0 16 16"><use href="#i-link" width="16" height="16"/></svg>
<svg class="ico" style="left:199.5px;top:105.5px;width:16px;height:16px" viewBox="0 0 16 16"><use href="#i-filter" width="16" height="16"/></svg>
<svg class="ico" style="left:221px;top:105px;width:18px;height:16px" viewBox="0 0 18 16"><use href="#i-si" width="18" height="16"/></svg>
<svg class="ico" style="left:249px;top:105px;width:6px;height:16px" viewBox="0 0 6 16"><use href="#i-dots" width="6" height="16"/></svg>
<div class="abs" style="left:37px;top:124px;width:226px;height:560px;background:#fff"></div>
<div class="abs" style="left:263px;top:124px;width:2px;height:560px;background:#ececec"></div>
<svg class="ico" style="left:60px;top:123.5px;width:16px;height:16px" viewBox="0 0 16 16"><use href="#i-prj" width="16" height="16"/></svg>
<div class="tt" style="left:78.5px;top:124px">ESL_AP_bootloader-uart-bgapi</div>
<svg class="ico" style="left:60px;top:140.5px;width:16px;height:16px" viewBox="0 0 16 16"><use href="#i-prj" width="16" height="16"/></svg>
<div class="tt" style="left:78.5px;top:141px">ESL_AP_bt_ncp_esl_ap</div>
<svg class="ico" style="left:60px;top:157.5px;width:16px;height:16px" viewBox="0 0 16 16"><use href="#i-prj" width="16" height="16"/></svg>
<div class="tt" style="left:78.5px;top:158px">ESL_TAG_bootloader-apploader</div>
<svg class="ico" style="left:43px;top:181px;width:10px;height:6px" viewBox="0 0 10 6"><path d="M1 1 L5 5 L9 1" fill="none" stroke="#7a7a7a" stroke-width="1.3"/></svg>
<svg class="ico" style="left:60px;top:174.5px;width:16px;height:16px" viewBox="0 0 16 16"><use href="#i-prjc" width="16" height="16"/></svg>
<div class="tt" style="left:78.5px;top:175px">ESL_TAG_bt_soc_esl_tag<span style="color:#8a6d3b"> [GNU AR</span></div>
<svg class="ico" style="left:61px;top:195px;width:7px;height:10px" viewBox="0 0 7 10"><path d="M1.2 1 L5.5 5 L1.2 9" fill="none" stroke="#7a7a7a" stroke-width="1.3"/></svg>
<svg class="ico" style="left:76px;top:191.5px;width:16px;height:16px" viewBox="0 0 16 16"><use href="#i-bin" width="16" height="16"/></svg>
<div class="tt" style="left:94.5px;top:192px">Binaries</div>
<svg class="ico" style="left:61px;top:212px;width:7px;height:10px" viewBox="0 0 7 10"><path d="M1.2 1 L5.5 5 L1.2 9" fill="none" stroke="#7a7a7a" stroke-width="1.3"/></svg>
<svg class="ico" style="left:76px;top:208.5px;width:16px;height:16px" viewBox="0 0 16 16"><use href="#i-inc" width="16" height="16"/></svg>
<div class="tt" style="left:94.5px;top:209px">Includes</div>
<svg class="ico" style="left:61px;top:229px;width:7px;height:10px" viewBox="0 0 7 10"><path d="M1.2 1 L5.5 5 L1.2 9" fill="none" stroke="#7a7a7a" stroke-width="1.3"/></svg>
<svg class="ico" style="left:76px;top:225.5px;width:16px;height:16px" viewBox="0 0 16 16"><use href="#i-fold" width="16" height="16"/></svg>
<div class="tt" style="left:94.5px;top:226px">autogen</div>
<svg class="ico" style="left:61px;top:246px;width:7px;height:10px" viewBox="0 0 7 10"><path d="M1.2 1 L5.5 5 L1.2 9" fill="none" stroke="#7a7a7a" stroke-width="1.3"/></svg>
<svg class="ico" style="left:76px;top:242.5px;width:16px;height:16px" viewBox="0 0 16 16"><use href="#i-fold" width="16" height="16"/></svg>
<div class="tt" style="left:94.5px;top:243px">config</div>
<svg class="ico" style="left:61px;top:263px;width:7px;height:10px" viewBox="0 0 7 10"><path d="M1.2 1 L5.5 5 L1.2 9" fill="none" stroke="#7a7a7a" stroke-width="1.3"/></svg>
<svg class="ico" style="left:76px;top:259.5px;width:16px;height:16px" viewBox="0 0 16 16"><use href="#i-fold" width="16" height="16"/></svg>
<div class="tt" style="left:94.5px;top:260px">gecko_sdk_4.3.0</div>
<svg class="ico" style="left:61px;top:280px;width:7px;height:10px" viewBox="0 0 7 10"><path d="M1.2 1 L5.5 5 L1.2 9" fill="none" stroke="#7a7a7a" stroke-width="1.3"/></svg>
<svg class="ico" style="left:76px;top:276.5px;width:16px;height:16px" viewBox="0 0 16 16"><use href="#i-fold" width="16" height="16"/></svg>
<div class="tt" style="left:94.5px;top:277px">GNU ARM v10.3.1 - Default</div>
<svg class="ico" style="left:61px;top:297px;width:7px;height:10px" viewBox="0 0 7 10"><path d="M1.2 1 L5.5 5 L1.2 9" fill="none" stroke="#7a7a7a" stroke-width="1.3"/></svg>
<svg class="ico" style="left:76px;top:293.5px;width:16px;height:16px" viewBox="0 0 16 16"><use href="#i-fold" width="16" height="16"/></svg>
<div class="tt" style="left:94.5px;top:294px">image</div>
<svg class="ico" style="left:61px;top:314px;width:7px;height:10px" viewBox="0 0 7 10"><path d="M1.2 1 L5.5 5 L1.2 9" fill="none" stroke="#7a7a7a" stroke-width="1.3"/></svg>
<svg class="ico" style="left:76px;top:310.5px;width:16px;height:16px" viewBox="0 0 16 16"><use href="#i-c" width="16" height="16"/></svg>
<div class="tt" style="left:94.5px;top:311px">app.c</div>
<svg class="ico" style="left:61px;top:331px;width:7px;height:10px" viewBox="0 0 7 10"><path d="M1.2 1 L5.5 5 L1.2 9" fill="none" stroke="#7a7a7a" stroke-width="1.3"/></svg>
<svg class="ico" style="left:76px;top:327.5px;width:16px;height:16px" viewBox="0 0 16 16"><use href="#i-h" width="16" height="16"/></svg>
<div class="tt" style="left:94.5px;top:328px">app.h</div>
<svg class="ico" style="left:61px;top:348px;width:7px;height:10px" viewBox="0 0 7 10"><path d="M1.2 1 L5.5 5 L1.2 9" fill="none" stroke="#7a7a7a" stroke-width="1.3"/></svg>
<svg class="ico" style="left:76px;top:344.5px;width:16px;height:16px" viewBox="0 0 16 16"><use href="#i-c" width="16" height="16"/></svg>
<div class="tt" style="left:94.5px;top:345px">esl_tag_user_display_driver.c</div>
<svg class="ico" style="left:61px;top:365px;width:7px;height:10px" viewBox="0 0 7 10"><path d="M1.2 1 L5.5 5 L1.2 9" fill="none" stroke="#7a7a7a" stroke-width="1.3"/></svg>
<svg class="ico" style="left:76px;top:361.5px;width:16px;height:16px" viewBox="0 0 16 16"><use href="#i-c" width="16" height="16"/></svg>
<div class="tt" style="left:94.5px;top:362px">main.c</div>
<svg class="ico" style="left:61px;top:382px;width:7px;height:10px" viewBox="0 0 7 10"><path d="M1.2 1 L5.5 5 L1.2 9" fill="none" stroke="#7a7a7a" stroke-width="1.3"/></svg>
<svg class="ico" style="left:76px;top:378.5px;width:16px;height:16px" viewBox="0 0 16 16"><use href="#i-c" width="16" height="16"/></svg>
<div class="tt" style="left:94.5px;top:379px">sl_gatt_service_device_informat</div>
<svg class="ico" style="left:76px;top:395.5px;width:16px;height:16px" viewBox="0 0 16 16"><use href="#i-bat" width="16" height="16"/></svg>
<div class="tt" style="left:94.5px;top:396px">create_bl_files_lzma.bat</div>
<svg class="ico" style="left:76px;top:412.5px;width:16px;height:16px" viewBox="0 0 16 16"><use href="#i-sh" width="16" height="16"/></svg>
<div class="tt" style="left:94.5px;top:413px">create_bl_files_lzma.sh</div>
<svg class="ico" style="left:76px;top:429.5px;width:16px;height:16px" viewBox="0 0 16 16"><use href="#i-bat" width="16" height="16"/></svg>
<div class="tt" style="left:94.5px;top:430px">create_bl_files.bat</div>
<svg class="ico" style="left:76px;top:446.5px;width:16px;height:16px" viewBox="0 0 16 16"><use href="#i-sh" width="16" height="16"/></svg>
<div class="tt" style="left:94.5px;top:447px">create_bl_files.sh</div>
<svg class="ico" style="left:76px;top:463.5px;width:16px;height:16px" viewBox="0 0 16 16"><use href="#i-slcp" width="16" height="16"/></svg>
<div class="tt" style="left:94.5px;top:464px">ESL_TAG_bt_soc_esl_tag.slcp</div>
<svg class="ico" style="left:76px;top:480.5px;width:16px;height:16px" viewBox="0 0 16 16"><use href="#i-txt" width="16" height="16"/></svg>
<div class="tt" style="left:94.5px;top:481px">ESL_TAG_bt_soc_esl_tag.slps</div>
<svg class="ico" style="left:76px;top:497.5px;width:16px;height:16px" viewBox="0 0 16 16"><use href="#i-txt" width="16" height="16"/></svg>
<div class="tt" style="left:94.5px;top:498px">readme.md</div>
<div class="panel" style="left:270px;top:76px;width:1162px;height:620px;background:#fff"></div>
<div class="abs" style="left:271px;top:77px;width:1160px;height:23px;background:#ececec;border-radius:4px 4px 0 0;border-bottom:1px solid #a8a8a8"></div>
<div class="abs" style="left:560px;top:77px;width:204px;height:23px;background:linear-gradient(#e8e8e8,#dadada);border-left:1px solid #a8a8a8;border-right:1px solid #a8a8a8;border-radius:3px 3px 0 0"></div>
<div class="abs" style="left:480px;top:77px;width:1px;height:22px;background:#a8a8a8"></div>
<svg class="ico" style="left:274px;top:80px;width:16px;height:16px" viewBox="0 0 16 16"><use href="#i-slcp" width="16" height="16"/></svg>
<div class="ui" style="left:294.5px;top:81.5px;">ESL_TAG_bt_soc_esl_tag.slcp</div>
<svg class="ico" style="left:484px;top:80px;width:16px;height:16px" viewBox="0 0 16 16"><use href="#i-c" width="16" height="16"/></svg>
<div class="ui" style="left:504px;top:81.5px;">app.c</div>
<svg class="ico" style="left:563px;top:80px;width:16px;height:16px" viewBox="0 0 16 16"><use href="#i-c" width="16" height="16"/></svg>
<div class="ui" style="left:583px;top:81.5px;letter-spacing:0.08px">esl_tag_user_display_driver.c</div>
<svg class="ico" style="left:747px;top:84px;width:10px;height:10px" viewBox="0 0 10 10"><path d="M1 1 L9 9 M9 1 L1 9" stroke="#222" stroke-width="1.2"/></svg>
<div class="abs" style="left:1390px;top:82px;width:10px;height:4px;border:1px solid #111;border-width:1.5px 1px"></div>
<div class="abs" style="left:1412px;top:82px;width:10px;height:10px;border:1px solid #111"><div style="position:absolute;left:0;top:1px;width:8px;height:1px;background:#111"></div></div>
<div class="abs" style="left:271px;top:100px;width:1160px;height:2px;background:#f0f0f0"></div>
<div class="abs" style="left:271px;top:100px;width:1px;height:600px;background:#e4e4e4"></div>
<svg class="abs" style="left:273px;top:112px;width:12px;height:570px"><rect width="12" height="570" fill="url(#hatch)"/><rect width="12" height="1" fill="#a8ccff"/></svg>
<div class="abs" style="left:319px;top:462px;width:1082px;height:14px;background:#e4eefd"></div>
<div class="abs" style="left:897px;top:102px;width:1px;height:580px;background:#b2b5b9"></div>
<svg class="ico" style="left:306.8px;top:113.6px;width:10px;height:10px" viewBox="0 0 10 10"><use href="#i-fold78" width="10" height="10"/></svg>
<div class="abs" style="left:0;top:0;width:1468px;height:673px;clip-path:inset(102px 0 0 0)"><div class="ln" style="top:98px">77</div><div class="cl" style="top:98px"></div>
<div class="ln" style="top:112px">78</div><div class="cl" style="top:112px"><span class="ty">sl_status_t</span> <span class="fn">esl_user_display_init</span>(<span class="kw">int</span> param_count, ...)</div>
<div class="ln" style="top:126px">79</div><div class="cl" style="top:126px">{</div>
<div class="ln" style="top:140px">80</div><div class="cl" style="top:140px">  <span class="dc">/////////////////////////////////////////////////////////////////////////////</span></div>
<div class="ln" style="top:154px">81</div><div class="cl" style="top:154px">  <span class="cm">// Please note that implementing this function can be omitted if unnecessary</span></div>
<div class="ln" style="top:168px">82</div><div class="cl" style="top:168px">  <span class="cm">// – in that particular case just pass a NULL </span><span class="cmsp">ptr</span><span class="cm"> to the esl_display_create()</span></div>
<div class="sq" style="left:663.6px;top:179.5px;width:24.6px"></div>
<div class="ln" style="top:182px">83</div><div class="cl" style="top:182px">  <span class="cm">// call in the appropriate parameter.</span></div>
<div class="ln" style="top:196px">84</div><div class="cl" style="top:196px">  <span class="dc">/////////////////////////////////////////////////////////////////////////////</span></div>
<div class="ln" style="top:210px">85</div><div class="cl" style="top:210px"></div>
<div class="ln" style="top:224px">86</div><div class="cl" style="top:224px">  <span class="cm">// Declaring pointer to the argument list</span></div>
<div class="ln" style="top:238px">87</div><div class="cl" style="top:238px">  <span class="ty">va_list</span>     ptr;</div>
<div class="ln" style="top:252px">88</div><div class="cl" style="top:252px">  <span class="cm">// Default status is SL_STATUS_FAIL, set to SL_STATUS_OK once the display</span></div>
<div class="ln" style="top:266px">89</div><div class="cl" style="top:266px">  <span class="cm">// has been initialized successfully.</span></div>
<div class="ln" style="top:280px">90</div><div class="cl" style="top:280px">  <span class="ty">sl_status_t</span> status = SL_STATUS_FAIL;</div>
<div class="ln" style="top:294px">91</div><div class="cl" style="top:294px">  <span class="cm">// Variable for </span><span class="cmsp">va</span><span class="cm"> parameter</span></div>
<div class="sq" style="left:447.6px;top:305.5px;width:17.4px"></div>
<div class="ln" style="top:308px">92</div><div class="cl" style="top:308px">  <span class="ty">uint8_t</span>     index;  <span class="cm">// 2nd parameter</span></div>
<div class="ln" style="top:322px">93</div><div class="cl" style="top:322px"></div>
<div class="ln" style="top:336px">94</div><div class="cl" style="top:336px">  <span class="cm">// User display </span><span class="cmsp">init</span><span class="cm">: Invalid parameters!</span></div>
<div class="sq" style="left:447.6px;top:347.5px;width:31.8px"></div>
<div class="ln" style="top:350px">95</div><div class="cl" style="top:350px">  sl_bt_esl_assert(param_count == ESL_DISPLAY_INIT_FUNC_PARAMETERS_COUNT);</div>
<div class="ln" style="top:364px">96</div><div class="cl" style="top:364px"></div>
<div class="ln" style="top:378px">97</div><div class="cl" style="top:378px">  <span class="cm">// Initializing argument to the list pointer</span></div>
<div class="ln" style="top:392px">98</div><div class="cl" style="top:392px">  va_start(ptr, param_count);</div>
<div class="ln" style="top:406px">99</div><div class="cl" style="top:406px">  <span class="cm">// Extract the index value (the only extra parameter)</span></div>
<div class="ln" style="top:420px">100</div><div class="cl" style="top:420px">  index = (<span class="ty">uint8_t</span>)va_arg(ptr, <span class="kw">int</span>);</div>
<div class="ln" style="top:434px">101</div><div class="cl" style="top:434px">  va_end(ptr);</div>
<div class="ln" style="top:448px">102</div><div class="cl" style="top:448px"></div>
<div class="ln" style="top:462px">103</div><div class="cl" style="top:462px">  <span class="dc">/////////////////////////////////////////////////////////////////////////////</span></div>
<div class="ln" style="top:476px">104</div><div class="cl" style="top:476px">  <span class="cm">// Put your additional display driver </span><span class="cmsp">init</span><span class="cm"> code here!                      //</span></div>
<div class="sq" style="left:606.0px;top:487.5px;width:31.8px"></div>
<div class="ln" style="top:490px">105</div><div class="cl" style="top:490px">  <span class="cm">// This is called once, during the invocation of esl_display_create().     //</span></div>
<div class="ln" style="top:504px">106</div><div class="cl" style="top:504px">  <span class="cm">// Temporary blocking functions are allowed to be called from here yet not //</span></div>
<div class="ln" style="top:518px">107</div><div class="cl" style="top:518px">  <span class="cm">// recommended.                                                            //</span></div>
<div class="ln" style="top:532px">108</div><div class="cl" style="top:532px">  <span class="cm">// If the display needs pre–initialization – especially if it takes longer //</span></div>
<div class="ln" style="top:546px">109</div><div class="cl" style="top:546px">  <span class="cm">// time to finish (e.g. internal boot of the display or a clock to become  //</span></div>
<div class="ln" style="top:560px">110</div><div class="cl" style="top:560px">  <span class="cm">// stable) – then it is highly recommended to take those pre–steps in the  //</span></div>
<div class="ln" style="top:574px">111</div><div class="cl" style="top:574px">  <span class="cm">// callback called app_init(), instead – and take only the post–init steps //</span></div>
<div class="ln" style="top:588px">112</div><div class="cl" style="top:588px">  <span class="cm">// here, if there&#x27;s any.                                                   //</span></div>
<div class="ln" style="top:602px">113</div><div class="cl" style="top:602px">  <span class="cm">// Do not forget to set result = SL_STATUS_OK after successful </span><span class="cmsp">init</span><span class="cm">.       //</span></div>
<div class="sq" style="left:786.0px;top:613.5px;width:31.8px"></div>
<div class="ln" style="top:616px">114</div><div class="cl" style="top:616px">  <span class="dc">/////////////////////////////////////////////////////////////////////////////</span></div>
<div class="ln" style="top:630px">115</div><div class="cl" style="top:630px"></div>
<div class="ln" style="top:644px">116</div><div class="cl" style="top:644px">  <span class="kw">return</span> status;</div>
<div class="ln" style="top:658px">117</div><div class="cl" style="top:658px">}</div></div>
<div class="abs" style="left:1429px;top:100px;width:1px;height:580px;background:#ececec"></div>
<div class="abs" style="left:1401px;top:102px;width:15px;height:580px;background:#f8f8f8;border-left:1px solid #e8e8e8;border-right:1px solid #e8e8e8"></div>
<div class="abs" style="left:1405px;top:600px;width:8px;height:90px;background:#7b7b7b;border-radius:4px"></div>
</div></body></html>
